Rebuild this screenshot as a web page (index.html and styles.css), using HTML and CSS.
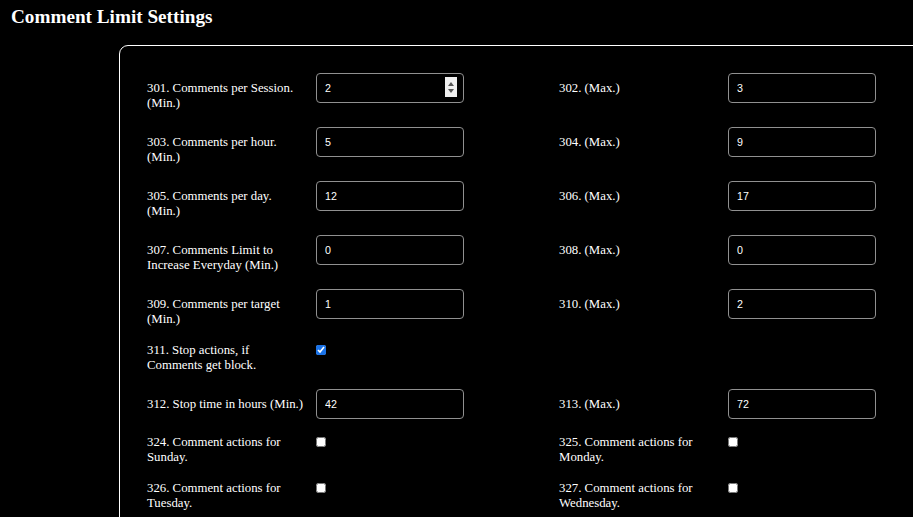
FILE: index.html
```html
<!DOCTYPE html>
<html lang="en">
<head>
    <meta charset="UTF-8">
    <meta name="viewport" content="width=device-width, initial-scale=1.0">
    <title>Comment Limit Settings</title>
    <link rel="stylesheet" href="styles.css">
</head>
<body>

    <h2 class="titulo">Comment Limit Settings</h2>

    <!-- Panel de ajustes -->
    <div class="panel">
        <div class="grid">

            <div class="campo">
                <label class="campo__label">301. Comments per Session. (Min.)</label>
                <div class="campo__num">
                    <input class="campo__input" type="text" value="2">
                    <span class="spinner"><i class="up"></i><i class="down"></i></span>
                </div>
            </div>
            <div class="campo">
                <label class="campo__label">302. (Max.)</label>
                <input class="campo__input" type="text" value="3">
            </div>

            <div class="campo">
                <label class="campo__label">303. Comments per hour. (Min.)</label>
                <input class="campo__input" type="text" value="5">
            </div>
            <div class="campo">
                <label class="campo__label">304. (Max.)</label>
                <input class="campo__input" type="text" value="9">
            </div>

            <div class="campo">
                <label class="campo__label">305. Comments per day. (Min.)</label>
                <input class="campo__input" type="text" value="12">
            </div>
            <div class="campo">
                <label class="campo__label">306. (Max.)</label>
                <input class="campo__input" type="text" value="17">
            </div>

            <div class="campo">
                <label class="campo__label">307. Comments Limit to Increase Everyday (Min.)</label>
                <input class="campo__input" type="text" value="0">
            </div>
            <div class="campo">
                <label class="campo__label">308. (Max.)</label>
                <input class="campo__input" type="text" value="0">
            </div>

            <div class="campo">
                <label class="campo__label">309. Comments per target (Min.)</label>
                <input class="campo__input" type="text" value="1">
            </div>
            <div class="campo">
                <label class="campo__label">310. (Max.)</label>
                <input class="campo__input" type="text" value="2">
            </div>

            <div class="campo campo--check">
                <label class="campo__label">311. Stop actions, if Comments get block.</label>
                <input class="campo__check" type="checkbox" checked>
            </div>
            <div class="campo"></div>

            <div class="campo">
                <label class="campo__label">312. Stop time in hours (Min.)</label>
                <input class="campo__input" type="text" value="42">
            </div>
            <div class="campo">
                <label class="campo__label">313. (Max.)</label>
                <input class="campo__input" type="text" value="72">
            </div>

            <div class="campo campo--check">
                <label class="campo__label">324. Comment actions for Sunday.</label>
                <input class="campo__check" type="checkbox">
            </div>
            <div class="campo campo--check">
                <label class="campo__label">325. Comment actions for Monday.</label>
                <input class="campo__check" type="checkbox">
            </div>

            <div class="campo campo--check">
                <label class="campo__label">326. Comment actions for Tuesday.</label>
                <input class="campo__check" type="checkbox">
            </div>
            <div class="campo campo--check">
                <label class="campo__label">327. Comment actions for Wednesday.</label>
                <input class="campo__check" type="checkbox">
            </div>

        </div>
    </div>

</body>
</html>
```

FILE: styles.css
```css
* {
    box-sizing: border-box;
}
html, body {
    overflow: hidden;
}
body {
    margin: 0;
    background-color: #000;
    color: #fff;
    font-family: "Liberation Serif", "Times New Roman", serif;
}

.titulo {
    font-size: 19.2px;
    font-weight: bold;
    line-height: 22px;
    margin: 6px 0 0 0;
    padding-left: 11px;
}

/* Panel */
.panel {
    margin: 17px 0 0 119px;
    width: 900px;
    border: 1px solid #fff;
    border-radius: 9px;
    padding: 27px 0 40px 27px;
}

.grid {
    display: grid;
    grid-template-columns: 411px 411px;
    row-gap: 16px;
}

.campo {
    display: flex;
    align-items: flex-start;
}

.campo:nth-child(even) {
    padding-left: 1px;
}

.campo__label {
    width: 158px;
    margin-right: 11px;
    padding-top: 8px;
    font-size: 12.8px;
    line-height: 15px;
}

.campo--check .campo__label {
    padding-top: 0;
}

.campo__num {
    position: relative;
}

.campo__input {
    display: block;
    width: 148px;
    height: 30px;
    margin: 0;
    padding: 0 8px;
    background-color: #000;
    color: #fff;
    border: 1px solid #909090;
    border-radius: 4px;
    font-family: "Liberation Sans", Arial, sans-serif;
    font-size: 10.7px;
    outline: none;
}

.campo__check {
    width: 10px;
    height: 10px;
    margin: 2px 0 0 0;
    accent-color: #1a73e8;
}

/* Flechas del campo numerico */
.spinner {
    position: absolute;
    top: 4px;
    left: 129px;
    width: 12px;
    height: 20px;
    background-color: #efefef;
    display: flex;
    flex-direction: column;
    align-items: center;
    justify-content: space-around;
    padding: 3px 0;
}

.spinner i {
    display: block;
    width: 0;
    height: 0;
    border-left: 3px solid transparent;
    border-right: 3px solid transparent;
}

.spinner .up {
    border-bottom: 4px solid #555;
}

.spinner .down {
    border-top: 4px solid #555;
}
```
